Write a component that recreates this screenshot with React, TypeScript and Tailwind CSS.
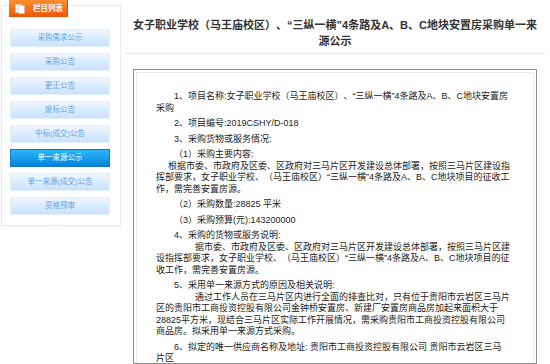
const navItems = [
  "采购需求公示",
  "采购公告",
  "更正公告",
  "废标公告",
  "中标(成交)公告",
  "单一来源公示",
  "单一来源(成交)公告",
  "资格预审",
];

const active = "单一来源公示";

export default function App() {
  return (
    <div className="flex min-h-[364px] w-[550px] bg-white pl-[1px] font-['Liberation_Sans','Noto_Sans_CJK_SC',sans-serif] text-[#333] [text-spacing-trim:space-all]">
      <Sidebar />
      <main className="ml-[4px] w-[420px]">
        <div className="border-b border-[#e6e6e6] px-[5px] pb-[4px] pt-[17px] text-center text-[11px] font-bold leading-[16px] text-[#333]">
          女子职业学校（马王庙校区）、“三纵一横”4条路及A、B、C地块安置房采购单一来源公示
        </div>
        <Article />
      </main>
    </div>
  );
}

function Sidebar() {
  return (
    <aside className="mt-[5px] h-[221px] w-[120px] border border-[#ececec] pb-[10px] shadow-[0_0_3px_rgba(0,0,0,0.06)]">
      <div className="-mt-[6px] ml-[7px] flex h-[17px] w-[59px] items-center border-r border-[#d94e00] bg-gradient-to-b from-[#ff8d2f] to-[#ec5300] pl-[6px]">
        <PagesIcon />
        <span className="ml-[8px] text-[7.5px] font-bold text-white">栏目列表</span>
      </div>
      <ul className="ml-[8px] mt-[12px] flex w-[100px] flex-col gap-[6px]">
        {navItems.map((item) => (
          <li
            key={item}
            className={
              item === active
                ? "flex h-[18px] items-center justify-center border border-[#1877bd] bg-gradient-to-b from-[#2cb6f9] to-[#0084da] text-[7.5px] text-white"
                : "flex h-[18px] items-center justify-center border border-[#e2effc] bg-gradient-to-b from-[#eef6ff] to-[#c8e2fc] text-[7.5px] text-[#62a5e4]"
            }
          >
            {item}
          </li>
        ))}
      </ul>
    </aside>
  );
}

function PagesIcon() {
  return (
    <svg viewBox="0 0 10 10" className="h-[10px] w-[10px]" aria-hidden>
      <rect x="0.5" y="0.5" width="6" height="8" fill="#f4f4f4" stroke="#cfcfcf" strokeWidth="0.6" />
      <rect x="3.5" y="1.5" width="6" height="8" fill="#ffffff" stroke="#c4c4c4" strokeWidth="0.6" />
    </svg>
  );
}

function Article() {
  return (
    <div className="ml-[8px] mt-[15px] h-[295px] w-[404px] border border-[#8e8e8e] p-[2px] pb-0">
      <div className="h-full border border-b-0 border-[#ececec] pl-[19px] pr-[19px] pt-[18px] text-[9px] leading-[11.5px] text-[#222]">
        <p className="mb-[4px] indent-[18px]">
          1、项目名称:女子职业学校（马王庙校区）、“三纵一横”4条路及A、B、C地块安置房采购
        </p>
        <p className="mb-[4px] indent-[18px]">2、项目编号:2019CSHY/D-018</p>
        <p className="mb-[4px] indent-[18px]">3、采购货物或服务情况:</p>
        <p className="mb-[4px] indent-[18px]">
          （1）采购主要内容:
          <br />
          <span className="inline-block w-[12px]" />
          根据市委、市政府及区委、区政府对三马片区开发建设总体部署，按照三马片区建设指挥部要求，女子职业学校、（马王庙校区）“三纵一横”4条路及A、B、C地块项目的征收工作，需完善安置房源。
        </p>
        <p className="mb-[4px] indent-[18px]">（2）采购数量:28825 平米</p>
        <p className="mb-[4px] indent-[18px]">（3）采购预算(元):143200000</p>
        <p className="mb-[4px] indent-[18px]">
          4、采购的货物或服务说明:
          <br />
          <span className="inline-block w-[39px]" />
          据市委、市政府及区委、区政府对三马片区开发建设总体部署，按照三马片区建设指挥部要求，女子职业学校、（马王庙校区）“三纵一横”4条路及A、B、C地块项目的征收工作，需完善安置房源。
        </p>
        <p className="mb-[4px] indent-[18px]">
          5、采用单一来源方式的原因及相关说明:
          <br />
          <span className="inline-block w-[39px]" />
          通过工作人员在三马片区内进行全面的排查比对，只有位于贵阳市云岩区三马片区的贵阳市工商投资控股有限公司金钟桥安置房、新建厂安置房商品房加起来面积大于28825平方米，现结合三马片区实际工作开展情况，需采购贵阳市工商投资控股有限公司
          <br />
          商品房。拟采用单一来源方式采购。
        </p>
        <p className="mb-[4px] indent-[18px]">
          6、拟定的唯一供应商名称及地址: 贵阳市工商投资控股有限公司 贵阳市云岩区三马
          <br />
          片区
        </p>
      </div>
    </div>
  );
}
